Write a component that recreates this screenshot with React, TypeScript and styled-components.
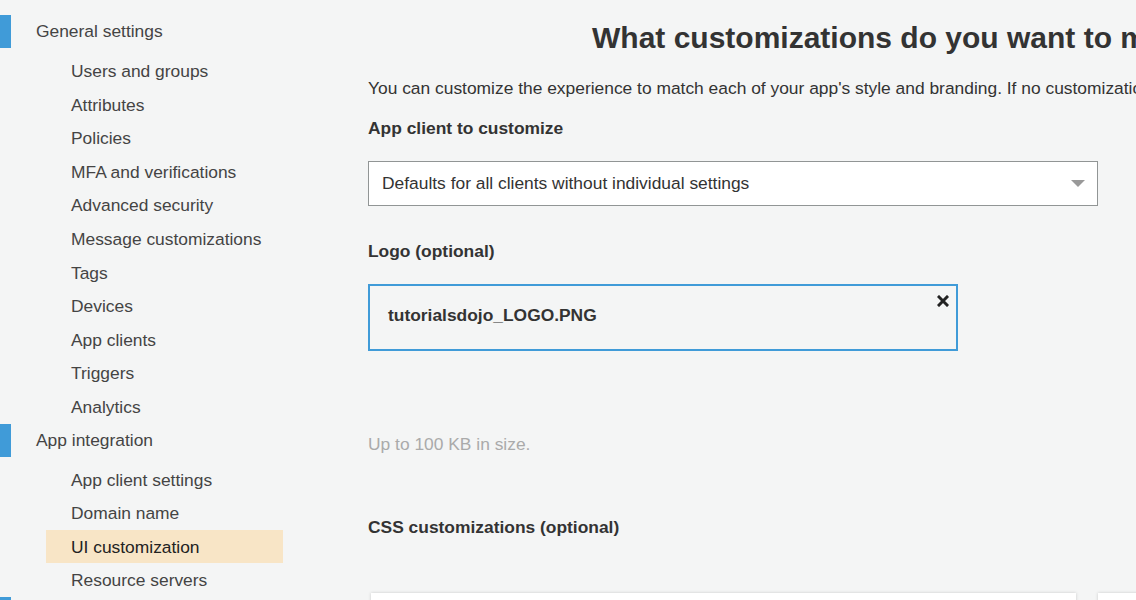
import styled, { createGlobalStyle } from "styled-components";

const GlobalStyle = createGlobalStyle`
	html, body {
		margin: 0;
		padding: 0;
		background: #f4f5f5;
		overflow: hidden;
	}
	body {
		font-family: "Liberation Sans", Arial, sans-serif;
		color: #333;
	}
`;

const Page = styled.div`
	display: flex;
	width: 1136px;
	height: 600px;
	overflow: hidden;
	background: #f4f5f5;
`;

const Sidebar = styled.nav`
	flex: 0 0 320px;
	padding-top: 15px;
`;

const GroupTitle = styled.div`
	height: 33px;
	line-height: 33px;
	border-left: 11px solid #409bd8;
	padding-left: 25px;
	margin-bottom: 6px;
	font-size: 17.4px;
	color: #444;
`;

const NavItem = styled.div<{ $active?: boolean }>`
	height: 33.6px;
	line-height: 35px;
	width: 212px;
	margin-left: 46px;
	padding-left: 25px;
	font-size: 17.4px;
	color: ${(props) => (props.$active ? "#222" : "#444")};
	background: ${(props) => (props.$active ? "#f8e5c6" : "transparent")};
`;

const Main = styled.main`
	flex: 1;
	min-width: 0;
	padding: 21px 0 0 48px;
	overflow: hidden;
`;

const Heading = styled.h1`
	margin: 0 0 21px 224px;
	font-size: 30px;
	line-height: 34px;
	font-weight: 700;
	white-space: nowrap;
	color: #333;
`;

const Intro = styled.p`
	margin: 0 0 16px;
	font-size: 17.4px;
	line-height: 24px;
	white-space: nowrap;
	color: #333;
`;

const Label = styled.div<{ $gap: number }>`
	font-size: 17.4px;
	line-height: 24px;
	font-weight: 700;
	color: #333;
	margin-bottom: ${(props) => props.$gap}px;
`;

const Select = styled.div`
	box-sizing: border-box;
	display: flex;
	align-items: center;
	justify-content: space-between;
	width: 730px;
	height: 45px;
	padding: 0 13px;
	background: #fff;
	border: 1px solid #919595;
	font-size: 17.4px;
	color: #333;
	margin-bottom: 33px;
`;

const Caret = styled.span`
	width: 0;
	height: 0;
	border-left: 7px solid transparent;
	border-right: 7px solid transparent;
	border-top: 7px solid #999;
	margin-right: -1px;
`;

const FileBox = styled.div`
	box-sizing: border-box;
	display: flex;
	justify-content: space-between;
	width: 590px;
	height: 67px;
	padding: 0 7px 4px 18px;
	border: 2px solid #409bd8;
	margin-bottom: 81px;
`;

const FileName = styled.span`
	align-self: center;
	font-size: 17.4px;
	font-weight: 700;
	color: #333;
`;

const RemoveIcon = styled.svg`
	margin-top: 9px;
	width: 12px;
	height: 12px;
`;

const Hint = styled.div`
	font-size: 17.4px;
	line-height: 24px;
	color: #aaa;
	margin-bottom: 59px;
`;

const Panels = styled.div`
	display: flex;
	gap: 22px;
	margin: 54px 0 0 3px;
`;

const Panel = styled.div<{ $width: number }>`
	flex: 0 0 ${(props) => props.$width}px;
	height: 200px;
	background: #fff;
	box-shadow: 0 0 3px rgba(0, 0, 0, 0.18);
`;

const generalItems = [
	"Users and groups",
	"Attributes",
	"Policies",
	"MFA and verifications",
	"Advanced security",
	"Message customizations",
	"Tags",
	"Devices",
	"App clients",
	"Triggers",
	"Analytics",
];

const integrationItems = [
	"App client settings",
	"Domain name",
	"UI customization",
	"Resource servers",
];

function App() {
	return (
		<>
			<GlobalStyle />
			<Page>
				<Sidebar>
					<GroupTitle>General settings</GroupTitle>
					{generalItems.map((item) => (
						<NavItem key={item}>{item}</NavItem>
					))}
					<GroupTitle>App integration</GroupTitle>
					{integrationItems.map((item) => (
						<NavItem key={item} $active={item === "UI customization"}>
							{item}
						</NavItem>
					))}
					<GroupTitle />
				</Sidebar>
				<Main>
					<Heading>What customizations do you want to make?</Heading>
					<Intro>
						You can customize the experience to match each of your app's style and
						branding. If no customizations are set, the default settings apply.
					</Intro>
					<Label $gap={21}>App client to customize</Label>
					<Select>
						<span>Defaults for all clients without individual settings</span>
						<Caret />
					</Select>
					<Label $gap={21}>Logo (optional)</Label>
					<FileBox>
						<FileName>tutorialsdojo_LOGO.PNG</FileName>
						<RemoveIcon viewBox="0 0 12 12">
							<path
								d="M2 2 L10 10 M10 2 L2 10"
								stroke="#222"
								strokeWidth="3"
								strokeLinecap="square"
							/>
						</RemoveIcon>
					</FileBox>
					<Hint>Up to 100 KB in size.</Hint>
					<Label $gap={0}>CSS customizations (optional)</Label>
					<Panels>
						<Panel $width={705} />
						<Panel $width={300} />
					</Panels>
				</Main>
			</Page>
		</>
	);
}

export default App;
